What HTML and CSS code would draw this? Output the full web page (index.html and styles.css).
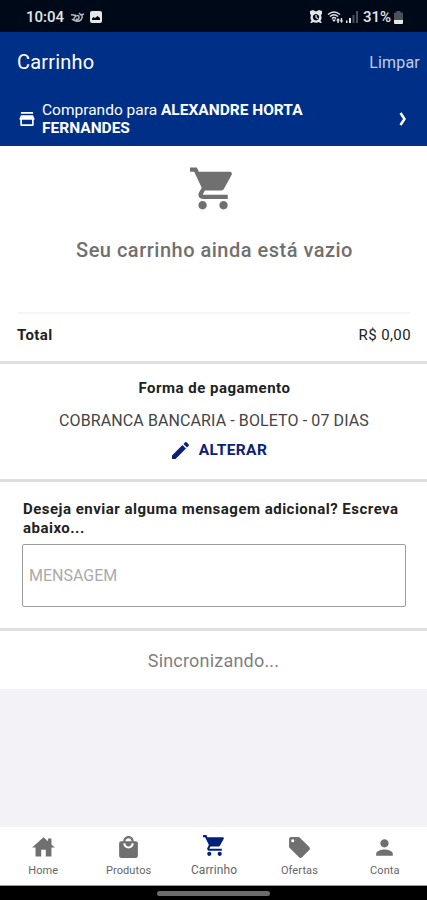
FILE: index.html
```html
<!DOCTYPE html>
<html lang="pt-br">
<head>
<meta charset="UTF-8">
<meta name="viewport" content="width=device-width, initial-scale=1.0">
<title>Carrinho</title>
<link rel="stylesheet" href="styles.css">
</head>
<body>

<div class="statusbar">
    <span class="clock">10:04</span>
    <svg class="status-bird" viewBox="0 0 15 12"><path d="M1 4c2-1 3 1 5 0M2 8c1 2 6 2 7-1M9 2l2 2 3-1M12 4c1 4-2 7-6 6-2 0-3-2-1-4s4-2 4 0-1 3-3 2" /></svg>
    <svg class="status-image" viewBox="0 0 12 12"><path fill-rule="evenodd" d="M2 0h8q2 0 2 2v8q0 2-2 2H2q-2 0-2-2V2q0-2 2-2zM2 9h8V7L7.500 5 5 7 3.500 6 2 7.500z" /></svg>
    <div class="status-right">
        <svg class="status-alarm" viewBox="0 0 14 14"><path fill-rule="evenodd" d="M1 1l3-1 3 1.500L10 0l3 1v3l-1 1q1.500 3-.5 6l1.500 2h-2l-1-1q-3 1.500-6 0l-1 1H1l1.500-2Q.5 8 2 5L1 4zM7 4a3.200 3.200 0 1 0 .01 0zM6.500 5h1.200v2.200l1.600 1-.6 1-2.200-1.500z" /></svg>
        <svg class="status-wifi" viewBox="0 0 17 14"><path class="line" d="M1 4.500q6-5 12 0M3 6.500q4-3.500 8 0M5 8.500q2-2 4 0" /><path d="M7 12l-2-2.500h4zM11 8l2 2.500h-1.200V13h-1.500v-2.500H9zM14.500 13l-1.800-2.500h1V8h1.500v2.500h1z" /></svg>
        <svg class="status-signal" viewBox="0 0 12 12"><path d="M0 9.500h1.500V12H0zM3 7h2v5H3z" /><path class="dim" d="M6.500 4h2v8h-2zM10 0h2v12h-2z" /></svg>
        <span class="percent">31%</span>
        <svg class="status-battery" viewBox="0 0 9 13"><path class="dim" d="M2.500 0h4v1.500H8q1 0 1 1V9H0V2.500q0-1 1-1h1.500z" /><path d="M0 9h9v3q0 1-1 1H1q-1 0-1-1z" /></svg>
    </div>
</div>

<header class="header">
    <div class="topbar">
        <h1>Carrinho</h1>
        <a class="clear">Limpar</a>
    </div>
    <div class="customer">
        <svg class="store-icon" viewBox="0 0 16 15"><path fill-rule="evenodd" d="M1.500 0h13v1.800h-13zM1.500 3.500h13L16 7v1.200h-.8V14q0 1-1 1H1.800q-1 0-1-1V8.200H0V7zM2.600 8.200V13h10.800V8.200z" /></svg>
        <div class="customer-name">Comprando para <b>ALEXANDRE HORTA<br>FERNANDES</b></div>
        <svg class="chevron" viewBox="0 0 8 14"><path d="M1.500 1L5.500 7 1.500 13" /></svg>
    </div>
</header>

<section class="empty">
    <svg class="cart-icon" viewBox="1 2 21 20"><path d="M7 18c-1.100 0-1.990.9-1.990 2S5.900 22 7 22s2-.9 2-2-.9-2-2-2zM1 2v2h2l3.600 7.590-1.350 2.450c-.16.28-.25.61-.25.96 0 1.100.9 2 2 2h12v-2H7.420c-.14 0-.25-.11-.25-.25l.03-.12.9-1.630h7.450c.75 0 1.410-.41 1.750-1.030l3.580-6.490A1 1 0 0 0 20 4H5.210l-.94-2H1zm16 16c-1.100 0-1.990.9-1.990 2s.89 2 1.990 2 2-.9 2-2-.9-2-2-2z" /></svg>
    <p>Seu carrinho ainda está vazio</p>
</section>

<section class="total">
    <b>Total</b>
    <span>R$ 0,00</span>
</section>

<section class="payment">
    <h2>Forma de pagamento</h2>
    <p>COBRANCA BANCARIA - BOLETO - 07 DIAS</p>
    <a class="change">
        <svg viewBox="3 3 18 18"><path d="M3 17.250V21h3.750L17.810 9.940l-3.750-3.750L3 17.250zM20.710 7.040a1 1 0 0 0 0-1.410l-2.340-2.340a1 1 0 0 0-1.410 0l-1.830 1.830 3.750 3.750 1.830-1.830z" /></svg>
        <span>ALTERAR</span>
    </a>
</section>

<section class="message">
    <label for="message">Deseja enviar alguma mensagem adicional? Escreva<br>abaixo...</label>
    <input type="text" id="message" placeholder="MENSAGEM">
</section>

<section class="sync"><span>Sincronizando...</span></section>

<nav class="tabs">
    <a class="tab">
        <svg viewBox="1 1 22 22"><path d="M10 20v-6h4v6h5v-8h3l-3-2.700V4h-3v2.600L12 3 2 12h3v8z" /></svg>
        <span>Home</span>
    </a>
    <a class="tab">
        <svg viewBox="0 0 24 24"><path d="M19 6h-2c0-2.760-2.240-5-5-5S7 3.240 7 6H5c-1.100 0-2 .9-2 2v12c0 1.100.9 2 2 2h14c1.100 0 2-.9 2-2V8c0-1.100-.9-2-2-2zm-7-3c1.660 0 3 1.340 3 3H9c0-1.660 1.340-3 3-3zm0 10c-2.760 0-5-2.240-5-5h2c0 1.660 1.340 3 3 3s3-1.340 3-3h2c0 2.760-2.240 5-5 5z" /></svg>
        <span>Produtos</span>
    </a>
    <a class="tab active">
        <svg viewBox="0 0 24 24"><path d="M7 18c-1.100 0-1.990.9-1.990 2S5.900 22 7 22s2-.9 2-2-.9-2-2-2zM1 2v2h2l3.600 7.590-1.350 2.450c-.16.28-.25.61-.25.96 0 1.100.9 2 2 2h12v-2H7.420c-.14 0-.25-.11-.25-.25l.03-.12.9-1.630h7.450c.75 0 1.410-.41 1.750-1.030l3.580-6.490A1 1 0 0 0 20 4H5.210l-.94-2H1zm16 16c-1.100 0-1.990.9-1.990 2s.89 2 1.990 2 2-.9 2-2-.9-2-2-2z" /></svg>
        <span>Carrinho</span>
    </a>
    <a class="tab">
        <svg viewBox="0 0 24 24"><path d="M21.410 11.580l-9-9C12.050 2.220 11.550 2 11 2H4c-1.100 0-2 .9-2 2v7c0 .55.220 1.050.590 1.420l9 9c.36.36.86.58 1.410.58s1.050-.22 1.410-.59l7-7c.37-.36.59-.86.59-1.410s-.23-1.060-.59-1.420zM5.500 7C4.670 7 4 6.330 4 5.500S4.670 4 5.500 4 7 4.670 7 5.500 6.330 7 5.500 7z" /></svg>
        <span>Ofertas</span>
    </a>
    <a class="tab">
        <svg viewBox="0 0 24 24"><path d="M12 12c2.210 0 4-1.790 4-4s-1.790-4-4-4-4 1.790-4 4 1.790 4 4 4zm0 2c-2.670 0-8 1.340-8 4v2h16v-2c0-2.660-5.330-4-8-4z" /></svg>
        <span>Conta</span>
    </a>
</nav>
<div class="gesture"></div>

</body>
</html>
```
FILE: styles.css
```css
* {
    box-sizing: border-box;
}
body {
    font-family: Roboto, sans-serif;
    margin: 0;
    height: 900px;
    display: flex;
    flex-direction: column;
    background-color: #f2f2f7;
    color: #222;
    overflow: hidden;
}
h1, h2, p {
    margin: 0;
}
svg {
    display: block;
    fill: currentColor;
    flex: none;
}
span, b, label {
    white-space: nowrap;
}
.statusbar {
    height: 32px;
    padding: 2px 24px 0 26px;
    display: flex;
    align-items: center;
    background-color: #000917;
    color: #e4e6e8;
}
.clock {
    width: 44px;
    font-size: 15px;
    font-weight: 500;
}
.status-bird {
    width: 15px;
    height: 12px;
    fill: none;
    stroke: #b5bac0;
    stroke-width: 1.5;
}
.status-image {
    width: 12px;
    height: 12px;
    margin-left: 5px;
}
.status-right {
    margin-left: auto;
    display: flex;
    align-items: center;
}
.status-alarm {
    width: 14px;
    height: 14px;
}
.status-wifi {
    width: 17px;
    height: 14px;
    margin-left: 4px;
}
.line {
    fill: none;
    stroke: currentColor;
    stroke-width: 1.4;
}
.status-signal {
    width: 12px;
    height: 12px;
    margin: 0 5px 0 2px;
}
.dim {
    fill: #4b515a;
}
.percent {
    width: 31px;
    font-size: 15px;
    font-weight: 500;
}
.status-battery {
    width: 9px;
    height: 13px;
}
.header {
    height: 114px;
    background-color: #002f87;
    color: #fff;
}
.topbar {
    height: 60px;
    padding: 0 7px 0 17px;
    display: flex;
    align-items: center;
    justify-content: space-between;
}
.topbar h1 {
    font-size: 20px;
    font-weight: 400;
    letter-spacing: 0.2px;
}
.clear {
    font-size: 16px;
    letter-spacing: 0.2px;
    color: #c0cce6;
}
.customer {
    height: 54px;
    padding: 0 20px 0 19px;
    display: flex;
    align-items: center;
}
.store-icon {
    width: 16px;
    height: 14px;
    margin-top: -1px;
}
.customer-name {
    flex: 1;
    margin-left: 7px;
    font-size: 15.5px;
    line-height: 18px;
}
.chevron {
    width: 8px;
    height: 14px;
    fill: none;
    stroke: #fff;
    stroke-width: 2.5;
}
.empty {
    height: 166px;
    padding-top: 21px;
    background-color: #fff;
    color: #707070;
    text-align: center;
}
.cart-icon {
    width: 44px;
    height: 43px;
    margin: 0 auto 0 190px;
}
.empty p {
    margin-top: 27px;
    padding-left: 2px;
    font-size: 20px;
    line-height: 26px;
    font-weight: 500;
    letter-spacing: 0.5px;
}
.total {
    height: 52px;
    padding: 0 16px 3px 17px;
    display: flex;
    align-items: center;
    justify-content: space-between;
    font-size: 15px;
    letter-spacing: 0.4px;
    border-bottom: 3px solid #dfdfdf;
    background: linear-gradient(#f5f5f5, #f5f5f5) 17px 0 / 393px 2px no-repeat #fff;
}
.payment {
    height: 118px;
    padding-top: 14px;
    background-color: #fff;
    border-bottom: 3px solid #dfdfdf;
    text-align: center;
}
.payment h2 {
    padding-left: 2px;
    font-size: 15px;
    line-height: 20px;
    font-weight: 700;
    letter-spacing: 0.5px;
}
.payment p {
    margin-top: 13px;
    padding-left: 1px;
    font-size: 16px;
    line-height: 20px;
    letter-spacing: 0.1px;
    color: #444;
}
.change {
    margin-top: 9px;
    padding-left: 12px;
    display: flex;
    align-items: center;
    justify-content: center;
    gap: 10px;
    font-size: 15.5px;
    line-height: 20px;
    font-weight: 700;
    letter-spacing: 0.4px;
    color: #0b2274;
}
.change svg {
    width: 17px;
    height: 17px;
}
.message {
    height: 149px;
    padding: 18px 20px 0 22px;
    background-color: #fff;
    border-bottom: 3px solid #dfdfdf;
}
.message label {
    display: block;
    padding-left: 1px;
    font-size: 15px;
    line-height: 19px;
    font-weight: 700;
    letter-spacing: 0.49px;
}
.message input {
    display: block;
    width: 384px;
    height: 63px;
    margin-top: 6px;
    padding: 0 6px;
    border: 1px solid #9c9c9c;
    border-radius: 2px;
    font-family: inherit;
    font-size: 16px;
}
.message input::placeholder {
    color: #aaa;
}
.sync {
    height: 58px;
    padding-top: 18px;
    background-color: #fff;
    color: #808080;
    font-size: 18px;
    line-height: 24px;
    letter-spacing: 0.2px;
    text-align: center;
}
.tabs {
    height: 59px;
    margin-top: auto;
    display: flex;
    background-color: #fff;
    border-bottom: 1px solid #999;
}
.tab {
    flex: 1;
    padding: 8px 0 0 1px;
    display: flex;
    flex-direction: column;
    align-items: center;
    color: #707070;
    font-size: 11px;
    line-height: 14px;
    letter-spacing: 0.1px;
}
.tab svg {
    width: 25px;
    height: 25px;
}
.tab span {
    margin-top: 4px;
    color: #666;
}
.active {
    padding-top: 6px;
    color: #00207c;
    font-size: 12px;
}
.active span {
    margin-top: 5px;
}
.gesture {
    height: 14px;
    padding-top: 5px;
    background-color: #000;
}
.gesture::before {
    content: "";
    display: block;
    width: 113px;
    height: 5px;
    margin: 0 auto;
    border-radius: 3px;
    background-color: #6c6c6c;
}
```
